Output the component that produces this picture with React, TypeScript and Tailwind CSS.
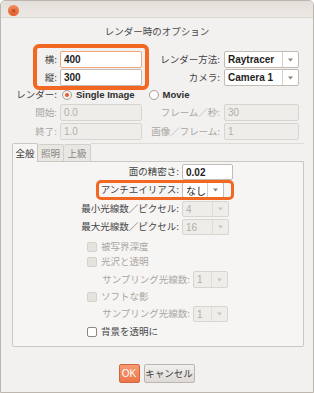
import React from 'react';

const JP = "'Noto Sans CJK JP', 'Noto Sans', sans-serif";
const LAT = "'Liberation Sans', 'Noto Sans CJK JP', sans-serif";

const Arrow = ({ disabled }: { disabled?: boolean }) => (
  <svg width="5" height="4" viewBox="0 0 5 4">
    <path d="M0 0.5 L5 0.5 L2.5 3.5 Z" fill={disabled ? '#c9c4be' : '#8a847d'} />
  </svg>
);

const Entry = ({ value, w, disabled, bold, focus }: { value: string; w: string; disabled?: boolean; bold?: boolean; focus?: boolean }) => (
  <div
    className={`${w} h-full flex items-center pl-[3px] rounded-[2px] border ${
      disabled ? 'bg-[#efedea] border-[#d9d4ce] text-[#b3aea8]' : 'bg-white border-[#c2bbb3] text-[#1e1e1e]'
    } ${focus ? 'border-[#f1a67e]' : ''} ${bold ? 'font-bold' : ''} text-[10px]`}
    style={{ fontFamily: LAT }}
  >
    {value}
  </div>
);

const Combo = ({ value, w, disabled, bold, jp }: { value: string; w: string; disabled?: boolean; bold?: boolean; jp?: boolean }) => (
  <div
    className={`${w} h-full flex rounded-[2px] border ${
      disabled ? 'bg-[#efedea] border-[#d9d4ce] text-[#b3aea8]' : 'bg-white border-[#c2bbb3] text-[#1e1e1e]'
    }`}
  >
    <div
      className={`flex-1 flex items-center pl-[3px] text-[10px] ${bold ? 'font-bold' : ''}`}
      style={{ fontFamily: jp ? JP : LAT }}
    >
      {value}
    </div>
    <div className={`w-[16px] flex items-center justify-center border-l ${disabled ? 'border-[#e0dcd7]' : 'border-[#d6d0c9]'}`}>
      <Arrow disabled={disabled} />
    </div>
  </div>
);

const Label = ({ text, w, disabled }: { text: string; w: string; disabled?: boolean }) => (
  <div
    className={`${w} shrink-0 text-right text-[9.5px] leading-none whitespace-nowrap ${disabled ? 'text-[#aaa5a0]' : 'text-[#444444]'}`}
    style={{ fontFamily: JP }}
  >
    {text}
  </div>
);

const Check = ({ text, disabled, indent }: { text: string; disabled?: boolean; indent: string }) => (
  <div className={`flex items-center h-[15px] ${indent}`}>
    <div
      className={`w-[10px] h-[10px] rounded-[2px] border ${
        disabled ? 'bg-[#e6e3df] border-[#d6d1cb]' : 'bg-white border-[#8e877f]'
      }`}
    />
    <span
      className={`ml-[4px] text-[9.5px] leading-none ${disabled ? 'text-[#aaa5a0]' : 'text-[#444444]'}`}
      style={{ fontFamily: JP }}
    >
      {text}
    </span>
  </div>
);

export default function App() {
  return (
    <div className="w-[314px] h-[393px] bg-[#f2f1f0] border border-[#bdb6ae] rounded-t-[5px] flex flex-col overflow-hidden">
      {/* title bar */}
      <div className="h-[17px] shrink-0 bg-gradient-to-b from-[#e3dfda] to-[#ece9e5] border-b border-[#dcd7d1] flex items-center pl-[7px]">
        <div className="w-[11px] h-[11px] mt-[3px] rounded-full bg-gradient-to-b from-[#f58b5c] to-[#e55a2c] flex items-center justify-center text-[#a8401c] text-[7px] leading-none font-bold" style={{ fontFamily: LAT }}>
          ×
        </div>
      </div>

      <div className="h-[26px] shrink-0 flex items-center justify-center text-[9.5px] text-[#4a4a4a]" style={{ fontFamily: JP }}>
        レンダー時のオプション
      </div>

      {/* size / render method */}
      <div className="relative mt-[7px] flex flex-col gap-[1px]">
        <div className="flex items-center h-[17px]">
          <Label text="横:" w="w-[56px]" />
          <div className="ml-[3px] h-full"><Entry value="400" w="w-[82px]" bold focus /></div>
          <Label text="レンダー方法:" w="w-[78px]" />
          <div className="ml-[4px] h-full"><Combo value="Raytracer" w="w-[75px]" bold /></div>
        </div>
        <div className="flex items-center h-[17px]">
          <Label text="縦:" w="w-[56px]" />
          <div className="ml-[3px] h-full"><Entry value="300" w="w-[82px]" bold /></div>
          <Label text="カメラ:" w="w-[78px]" />
          <div className="ml-[4px] h-full"><Combo value="Camera 1" w="w-[75px]" bold /></div>
        </div>
        <div className="absolute left-[32px] top-[-7px] w-[116px] h-[46px] border-[4px] border-[#f26722] rounded-[6px] pointer-events-none" />
      </div>

      {/* render mode */}
      <div className="flex items-center h-[16px] mt-[1px]">
        <Label text="レンダー:" w="w-[56px]" />
        <div className="ml-[5px] w-[10px] h-[10px] rounded-full border border-[#a49d95] bg-[#f4f3f1] flex items-center justify-center">
          <div className="w-[4px] h-[4px] rounded-full bg-[#e45a2b]" />
        </div>
        <span className="ml-[4px] text-[9.5px] font-bold text-[#2e2e2e]" style={{ fontFamily: LAT }}>Single Image</span>
        <div className="ml-[14px] w-[10px] h-[10px] rounded-full border border-[#a49d95] bg-white" />
        <span className="ml-[4px] text-[9.5px] font-bold text-[#2e2e2e]" style={{ fontFamily: LAT }}>Movie</span>
      </div>

      <div className="flex flex-col gap-[2px] mt-[1px]">
        <div className="flex items-center h-[17px]">
          <Label text="開始:" w="w-[56px]" disabled />
          <div className="ml-[3px] h-full"><Entry value="0.0" w="w-[82px]" disabled /></div>
          <Label text="フレーム／秒:" w="w-[78px]" disabled />
          <div className="ml-[4px] h-full"><Entry value="30" w="w-[75px]" disabled /></div>
        </div>
        <div className="flex items-center h-[17px]">
          <Label text="終了:" w="w-[56px]" disabled />
          <div className="ml-[3px] h-full"><Entry value="1.0" w="w-[82px]" disabled /></div>
          <Label text="画像／フレーム:" w="w-[78px]" disabled />
          <div className="ml-[4px] h-full"><Entry value="1" w="w-[75px]" disabled /></div>
        </div>
      </div>

      {/* notebook */}
      <div className="mt-[3px] ml-[11px] w-[292px] flex flex-col">
        <div className="flex items-end h-[19px]">
          <div className="w-[26px] h-[19px] bg-[#f6f5f4] border border-b-0 border-[#cdc7c1] rounded-t-[2px] flex items-center justify-center text-[9.5px] text-[#3c3c3c] relative z-10" style={{ fontFamily: JP }}>
            全般
          </div>
          <div className="w-[26px] h-[18px] bg-[#e9e7e4] border border-l-0 border-b-0 border-[#d3cec8] rounded-t-[2px] flex items-center justify-center text-[9.5px] text-[#8c8781]" style={{ fontFamily: JP }}>
            照明
          </div>
          <div className="w-[27px] h-[18px] bg-[#e9e7e4] border border-l-0 border-b-0 border-[#d3cec8] rounded-t-[2px] flex items-center justify-center text-[9.5px] text-[#8c8781]" style={{ fontFamily: JP }}>
            上級
          </div>
          <div className="flex-1 h-[19px] border-t border-[#dedad5]" />
        </div>
        <div className="h-[186px] -mt-[1px] bg-[#f6f5f4] border border-[#cdc7c1] rounded-b-[2px] flex flex-col">
          <div className="flex items-center h-[16px] mt-[2px]">
            <Label text="面の精密さ:" w="w-[166px]" />
            <div className="ml-[3px] h-full"><Entry value="0.02" w="w-[51px]" bold /></div>
          </div>
          <div className="relative flex items-center h-[16px] mt-[2px]">
            <Label text="アンチエイリアス:" w="w-[166px]" />
            <div className="ml-[3px] h-full"><Combo value="なし" w="w-[42px]" jp /></div>
            <div className="absolute left-[83px] top-[-2px] w-[138px] h-[20px] border-[3px] border-[#f26722] rounded-[5px] pointer-events-none" />
          </div>
          <div className="flex items-center h-[16px] mt-[3px]">
            <Label text="最小光線数／ピクセル:" w="w-[166px]" />
            <div className="ml-[3px] h-full"><Combo value="4" w="w-[47px]" disabled /></div>
          </div>
          <div className="flex items-center h-[16px] mt-[2px]">
            <Label text="最大光線数／ピクセル:" w="w-[166px]" />
            <div className="ml-[3px] h-full"><Combo value="16" w="w-[47px]" disabled /></div>
          </div>
          <div className="mt-[4px]">
            <Check text="被写界深度" disabled indent="ml-[74px]" />
            <Check text="光沢と透明" disabled indent="ml-[74px]" />
          </div>
          <div className="flex items-center h-[17px] mt-[2px]">
            <Label text="サンプリング光線数:" w="w-[177px]" disabled />
            <div className="ml-[3px] h-full"><Combo value="1" w="w-[35px]" disabled /></div>
          </div>
          <div className="mt-[1px]">
            <Check text="ソフトな影" disabled indent="ml-[74px]" />
          </div>
          <div className="flex items-center h-[16px] mt-[2px]">
            <Label text="サンプリング光線数:" w="w-[177px]" disabled />
            <div className="ml-[3px] h-full"><Combo value="1" w="w-[35px]" disabled /></div>
          </div>
          <div className="mt-[2px]">
            <Check text="背景を透明に" indent="ml-[74px]" />
          </div>
        </div>
      </div>

      {/* buttons */}
      <div className="mt-[17px] flex justify-center gap-[4px] pr-[1px]">
        <div className="w-[21px] h-[19px] rounded-[2px] border border-[#d0673d] bg-gradient-to-b from-[#f59a72] to-[#ec7649] flex items-center justify-center text-[10px] text-white" style={{ fontFamily: LAT }}>
          OK
        </div>
        <div className="w-[51px] h-[19px] rounded-[2px] border border-[#bdb6ae] bg-gradient-to-b from-[#f1efed] to-[#dedad6] flex items-center justify-center text-[9.5px] text-[#3c3c3c]" style={{ fontFamily: JP }}>
          キャンセル
        </div>
      </div>
    </div>
  );
}
